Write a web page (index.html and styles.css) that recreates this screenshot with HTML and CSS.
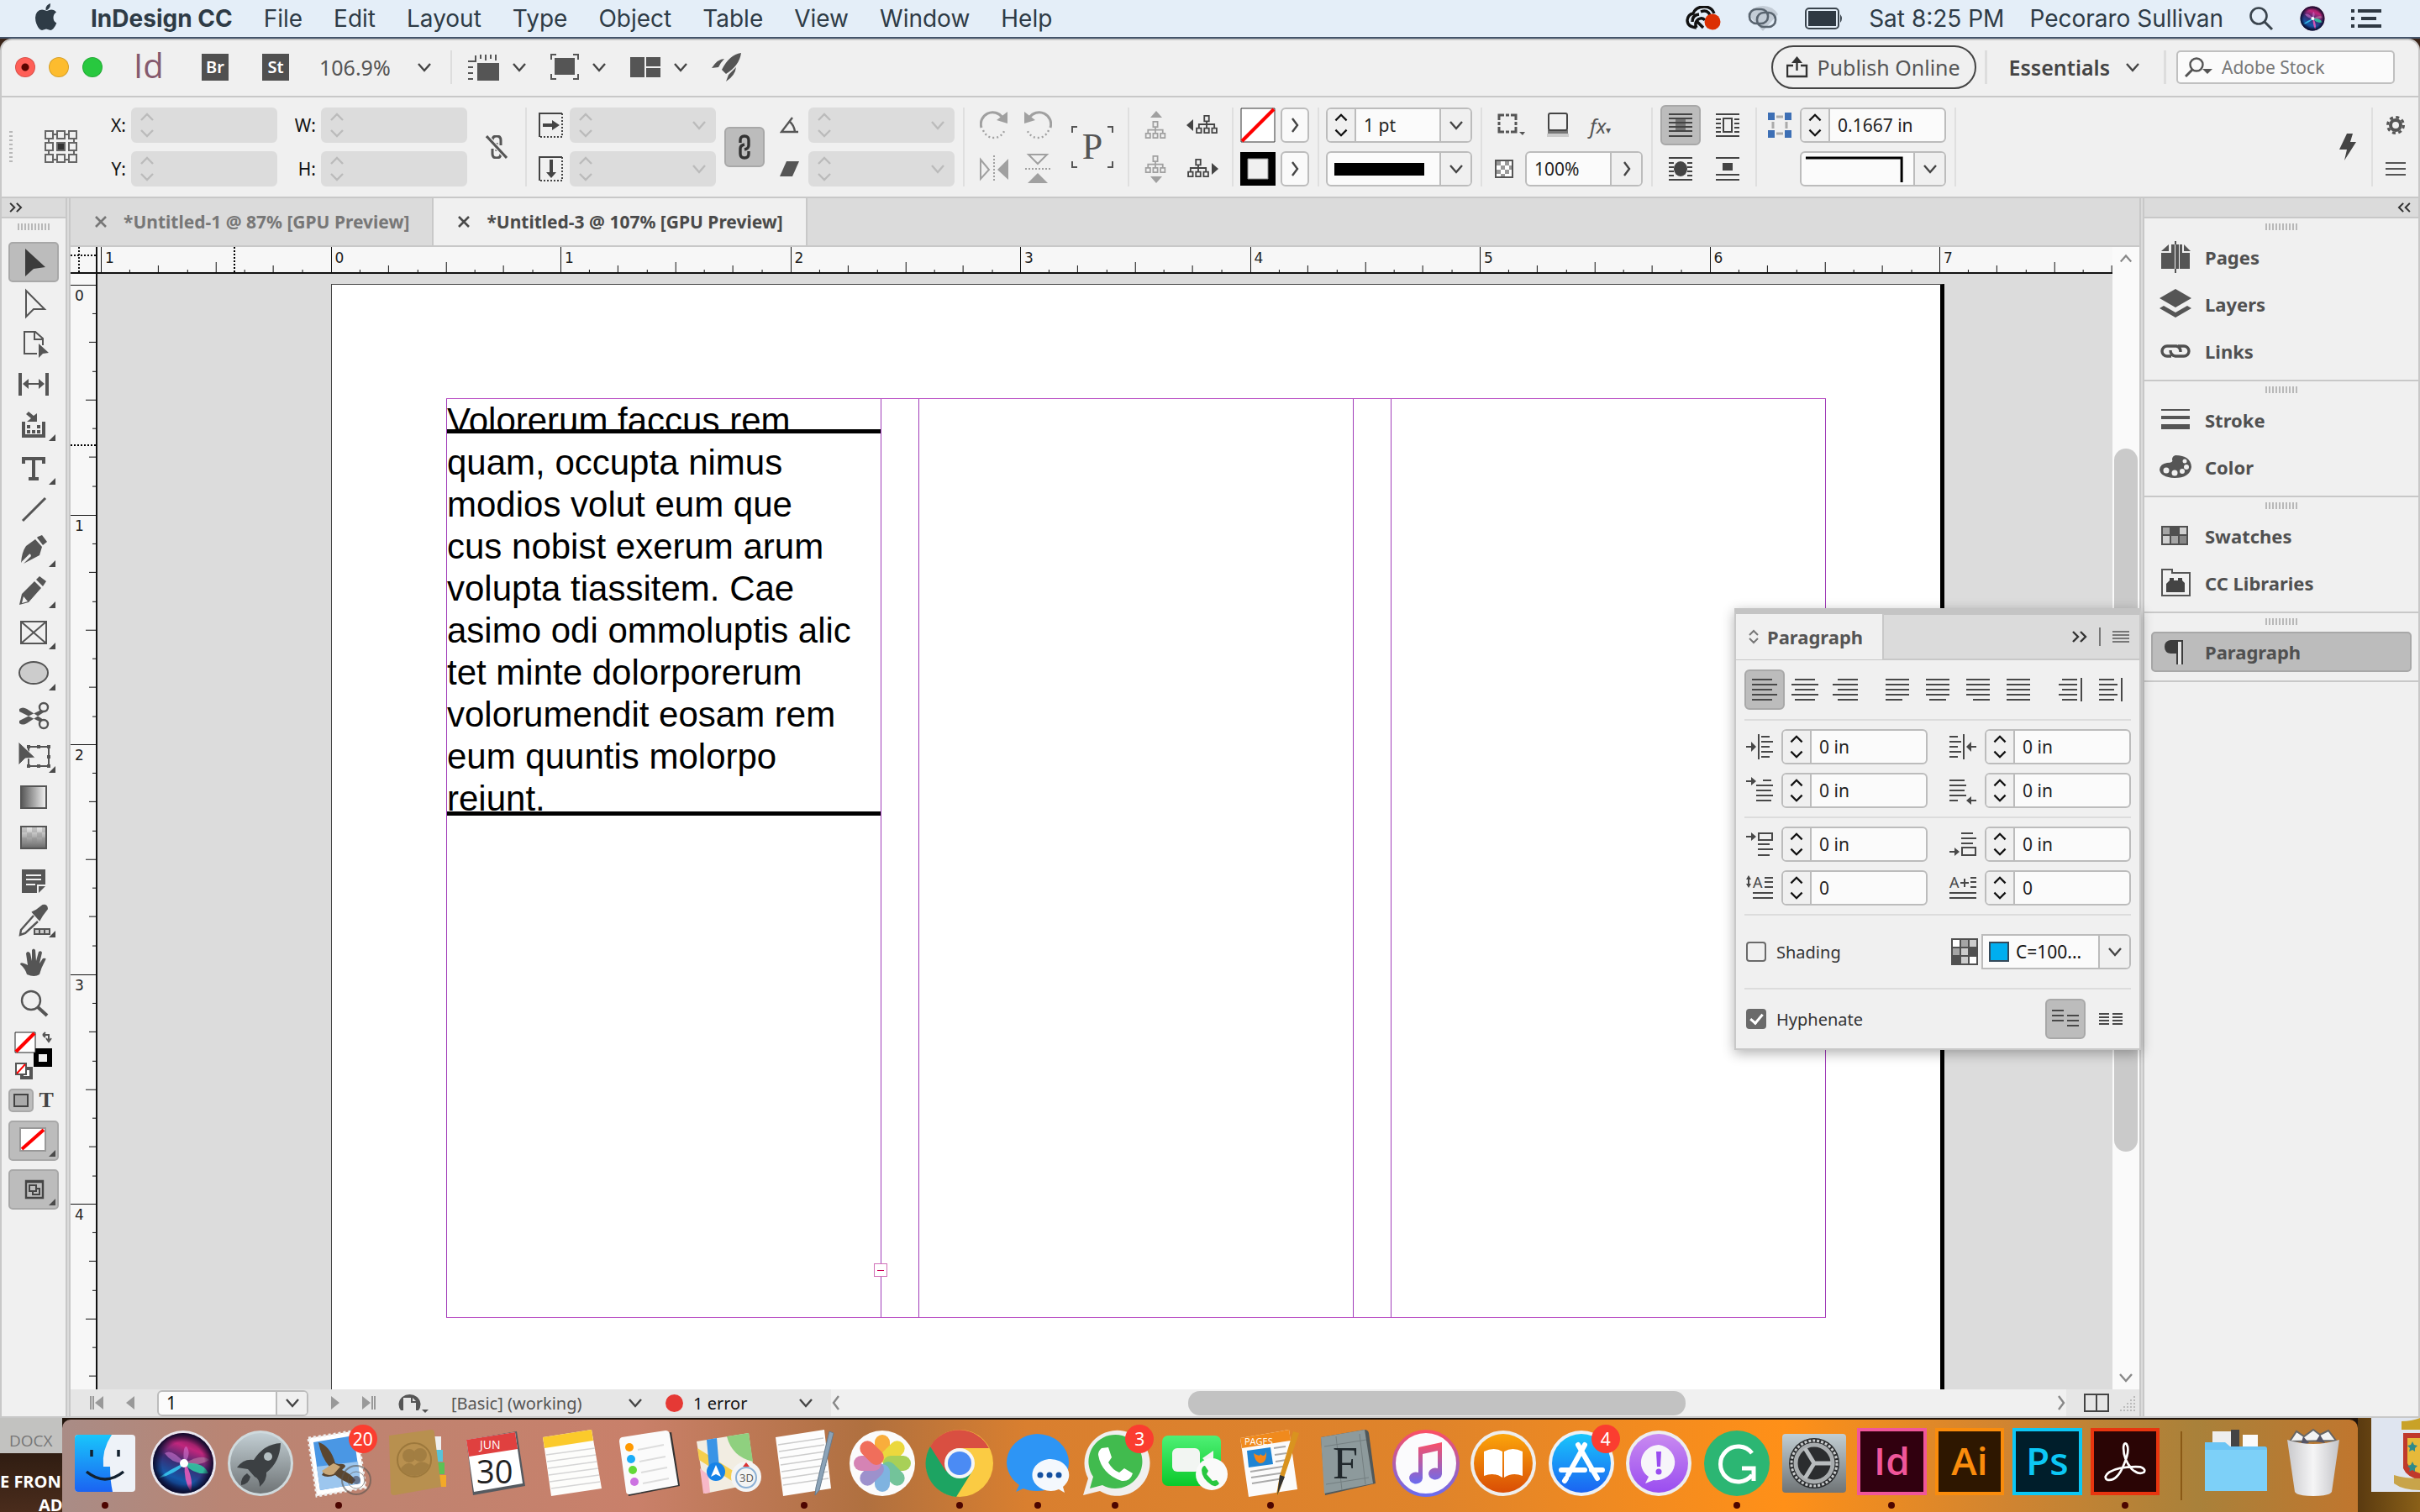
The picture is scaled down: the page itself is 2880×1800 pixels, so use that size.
FILE: index.html
```html
<!DOCTYPE html>
<html lang="en">
<head>
    <meta charset="UTF-8">
    <meta name="viewport" content="width=device-width, initial-scale=1.0">
    <title>InDesign CC</title>
    <link rel="stylesheet" href="styles.css">
</head>
<body>
    <!-- shared icons -->
    <svg class="defs" width="0" height="0">
        <defs>
            <linearGradient id="gSiri" x1=".7" y1="0" x2=".3" y2="1"><stop offset="0" stop-color="#5a1648"/><stop offset=".25" stop-color="#c0267c"/><stop offset=".5" stop-color="#3a2a70"/><stop offset=".75" stop-color="#1558a8"/><stop offset="1" stop-color="#10144a"/></linearGradient>
            <radialGradient id="gRim"><stop offset=".7" stop-color="#0a0a2a" stop-opacity="0"/><stop offset="1" stop-color="#0a0a2a"/></radialGradient>
            <linearGradient id="gBlue" x1="0" y1="0" x2="0" y2="1"><stop offset="0" stop-color="#19c6fb"/><stop offset="1" stop-color="#1b63f2"/></linearGradient>
            <linearGradient id="gGray" x1="0" y1="0" x2="0" y2="1"><stop offset="0" stop-color="#c2ced3"/><stop offset="1" stop-color="#6f7476"/></linearGradient>
            <linearGradient id="gGreen" x1="0" y1="0" x2="0" y2="1"><stop offset="0" stop-color="#4ef075"/><stop offset="1" stop-color="#0bc92b"/></linearGradient>
            <linearGradient id="gOrange" x1="0" y1="0" x2="0" y2="1"><stop offset="0" stop-color="#fba50b"/><stop offset="1" stop-color="#d94d05"/></linearGradient>
            <linearGradient id="gMusic" x1="0" y1="0" x2="0" y2="1"><stop offset="0" stop-color="#fa4f66"/><stop offset="1" stop-color="#6a6cf0"/></linearGradient>
            <linearGradient id="gPurple" x1="0" y1="0" x2="0" y2="1"><stop offset="0" stop-color="#c98af0"/><stop offset="1" stop-color="#9a4df0"/></linearGradient>
            <linearGradient id="gFade" x1="0" y1="0" x2="1" y2="0"><stop offset="0" stop-color="#555"/><stop offset="1" stop-color="#f4f4f4"/></linearGradient>
            <linearGradient id="gFeather" x1="0" y1="0" x2="0" y2="1"><stop offset="0" stop-color="#eee"/><stop offset="1" stop-color="#666"/></linearGradient>
            <linearGradient id="gTrash" x1="0" y1="0" x2="1" y2="0"><stop offset="0" stop-color="#c9c9cc"/><stop offset=".5" stop-color="#f5f5f6"/><stop offset="1" stop-color="#c4c4c8"/></linearGradient>
        </defs>
        <symbol id="spin" viewBox="0 0 34 38"><path d="M10 13l7-7 7 7M10 25l7 7 7-7" fill="none" stroke="currentColor" stroke-width="2.4"/></symbol>
        <symbol id="down" viewBox="0 0 18 12"><path d="M2 2l7 8 7-8" fill="none" stroke="currentColor" stroke-width="2.4"/></symbol>
        <symbol id="next" viewBox="0 0 12 18"><path d="M3 1l6 8-6 8" fill="none" stroke="currentColor" stroke-width="2.4"/></symbol>
        <symbol id="more" viewBox="0 0 20 14"><path d="M2 1l6 6-6 6M11 1l6 6-6 6" fill="none" stroke="currentColor" stroke-width="2.4"/></symbol>
        <symbol id="close" viewBox="0 0 14 14"><path d="M1 1l12 12M13 1L1 13" fill="none" stroke="currentColor" stroke-width="2.6"/></symbol>
        <symbol id="corner" viewBox="0 0 60 48"><path d="M48 43h8v-8z" fill="#4a4a4a"/></symbol>
        <symbol id="grip" viewBox="0 0 38 8"><path d="M1 0v8M5 0v8M9 0v8M13 0v8M17 0v8M21 0v8M25 0v8M29 0v8M33 0v8M37 0v8" stroke="#b8b8b8" stroke-width="2"/></symbol>
        <symbol id="inch-h" viewBox="0 0 274 30" preserveAspectRatio="none"><path d="M.5 0v30M34.5 27v3M68.5 22v8M103.5 27v3M137.5 18v12M171.5 27v3M205.5 22v8M240.5 27v3" stroke="#111" shape-rendering="crispEdges"/></symbol>
        <symbol id="inch-v" viewBox="0 0 30 274" preserveAspectRatio="none"><path d="M0 .5h30M26 34.5h4M22 68.5h8M26 103.5h4M18 137.5h12M26 171.5h4M22 205.5h8M26 240.5h4" stroke="#111" shape-rendering="crispEdges"/></symbol>
        <symbol id="tree" viewBox="0 0 28 24"><path d="M11 1h6v7h-6zM1 17h6v6H1zM11 17h6v6h-6zM21 17h6v6h-6zM14 8v9M4 17v-5h20v5" fill="none" stroke="currentColor" stroke-width="2"/></symbol>
        <symbol id="chain" viewBox="0 0 38 16"><path d="M17 2H9a6 6 0 0 0 0 12h5M22 2h7a6 6 0 0 1 0 12H19q-6-1-6-7M14 2h6q5 1 5 7" fill="none" stroke="currentColor" stroke-width="3.4"/></symbol>
        <symbol id="siri" viewBox="0 0 80 80"><circle cx="40" cy="40" r="39" fill="#e8e6ee"/><circle cx="40" cy="40" r="36" fill="url(#gSiri)"/><path d="M41 39Q26 22 18 28q8 12 23 12Q39 20 44 20q6 8-2 20" fill="#d77bd8" opacity=".55"/><path d="M42 40q20-12 29-4-12 8-29 4" fill="#b06a9c" opacity=".8"/><path d="M42 40q22-2 28 12-18 2-28-11" fill="#2fd0a4" opacity=".85"/><path d="M41 40Q26 46 10 58q20-5 32-17" fill="#39c8f0" opacity=".9"/><path d="M42 40q-2 20 7 34 4-14-6-34" fill="#e65ab8" opacity=".9"/><circle cx="41" cy="40" r="5" fill="#fff"/><circle cx="40" cy="40" r="36" fill="url(#gRim)"/></symbol>
    </svg>

    <header class="menubar">
        <svg class="apple" viewBox="0 0 26 32"><path d="M18 0q.4 4-2 6.400T12.500 8Q12 4.500 14 2.500T18 0M21.500 17q0-4.500 3.500-6.500-2.200-3-6-3-2 0-5.500 1.500Q10.500 7.500 8 7.500q-7.500.6-8 9.500.2 8 5 13.500 1.500 1.400 3 1.500l5-1.400L18 32q1.600 0 3.500-2 2.400-2.800 3.800-6.500-3.800-2-3.800-6.500" fill="#2e3b46"/></svg>
        <nav class="menus">
            <a class="app" href="#">InDesign CC</a>
            <a href="#">File</a>
            <a href="#">Edit</a>
            <a href="#">Layout</a>
            <a href="#">Type</a>
            <a href="#">Object</a>
            <a href="#">Table</a>
            <a href="#">View</a>
            <a href="#">Window</a>
            <a href="#">Help</a>
        </nav>
        <div class="extras">
            <svg width="42" height="30" viewBox="0 0 42 30"><path d="M13 26Q2 25 2 17q1-7 7-8 3-8 13-8 9 0 12 8M8 19q0-8 8-9M13 26q-3-6 2-10 5-3 8 1M18 7q8-3 11 4M13 18l8 8" fill="none" stroke="#111" stroke-width="3.400"/><circle cx="32" cy="19" r="9.500" fill="#dc2f02"/></svg>
            <svg width="40" height="30" viewBox="0 0 40 30"><path d="M2 10Q8 0 20 0t18 10L20 30z" fill="#c3ccd6"/><g fill="none" stroke="#59646f" stroke-width="2.600"><rect x="4" y="4" width="22" height="17" rx="8"/><rect x="13" y="8" width="22" height="17" rx="8"/></g></svg>
            <svg width="46" height="26" viewBox="0 0 46 26"><rect x="1" y="1" width="39" height="24" rx="4" fill="none" stroke="#3a444d" stroke-width="2"/><rect x="4" y="4" width="33" height="18" fill="#2f3943"/><path d="M42 8q4 5 0 10z" fill="#3a444d"/></svg>
            <span>Sat 8:25 PM</span>
            <span>Pecoraro Sullivan</span>
            <svg width="30" height="30" viewBox="0 0 30 30"><circle cx="12" cy="12" r="9.500" fill="none" stroke="#3a444d" stroke-width="2.600"/><path d="M19 19l9 9" stroke="#3a444d" stroke-width="3"/></svg>
            <svg width="32" height="32"><use href="#siri"/></svg>
            <svg width="36" height="22" viewBox="0 0 36 22"><path d="M0 2h4M8 2h28M0 11h4M12 11h18M0 20h4M8 20h28" stroke="#2f3943" stroke-width="4"/></svg>
        </div>
    </header>

    <main class="window">
        <div class="appbar">
            <div class="lights"><i class="red"></i><i class="yellow"></i><i class="green"></i></div>
            <span class="logo">Id</span>
            <button class="badge">Br</button>
            <button class="badge">St</button>
            <div class="pick zoom">
                <select aria-label="Zoom level"><option>106.9%</option></select>
                <svg class="chev"><use href="#down"/></svg>
            </div>
            <div class="views">
                <button aria-label="View options"><svg width="38" height="32" viewBox="0 0 38 32"><path d="M12 11h26v21H12z" fill="#555"/><path d="M10 2v7H1M16 1v5M22 1v7M28 1v5M34 1v7M1 16h6M1 23h6M1 30h6" fill="none" stroke="#555" stroke-width="2"/></svg><svg class="chev"><use href="#down"/></svg></button>
                <button aria-label="Screen mode"><svg width="34" height="32" viewBox="0 0 34 32"><path d="M5 5h24v20H5z" fill="#555"/><path d="M1 7V1h6M27 1h6v6M33 24v6h-6M7 30H1v-6" fill="none" stroke="#555" stroke-width="2"/></svg><svg class="chev"><use href="#down"/></svg></button>
                <button aria-label="Arrange documents"><svg width="36" height="24" viewBox="0 0 36 24"><path d="M0 0h17v24H0zM19 0h17v11H19zM19 13h17v11H19z" fill="#555"/></svg><svg class="chev"><use href="#down"/></svg></button>
                <button aria-label="GPU performance"><svg width="36" height="34" viewBox="0 0 36 34"><path d="M35 0Q21 2 12 20l5 5Q33 15 35 0M15 7Q7 7 0 18l8-1q3-6 7-10M29 17l-9 9-3 8q11-7 12-17" fill="#555"/></svg></button>
            </div>
            <button class="publish"><svg width="26" height="26" viewBox="0 0 26 26"><path d="M8 11H1v13h23V11h-7M12.500 17V3" fill="none" stroke="#333" stroke-width="2.400"/><path d="M6 8l6.500-8L19 8z" fill="#333"/></svg>Publish Online</button>
            <button class="workspace-name">Essentials <svg class="chev"><use href="#down"/></svg></button>
            <label class="stock">
                <svg width="34" height="24" viewBox="0 0 34 24"><circle cx="14" cy="9" r="7.500" fill="none" stroke="#555" stroke-width="2.400"/><path d="M9 15l-8 8" stroke="#555" stroke-width="3"/><path d="M21 14h12l-6 6z" fill="#555"/></svg>
                <input type="text" placeholder="Adobe Stock" aria-label="Search Adobe Stock">
            </label>
        </div>

        <div class="control">
            <div class="group position">
                <svg class="tall" width="4" height="38" viewBox="0 0 4 38"><path d="M2 0v38" stroke="#b8b8b8" stroke-width="4" stroke-dasharray="2 3"/></svg>
                <svg class="tall" width="40" height="40" viewBox="0 0 40 40"><path d="M5 5h30v30H5z" fill="none" stroke="#666" stroke-width="2"/><g fill="#f0f0f0" stroke="#666" stroke-width="2"><path d="M1 1h9v9H1zM15 1h9v9h-9zM29 1h9v9h-9zM1 15h9v9H1zM29 15h9v9h-9zM1 29h9v9H1zM15 29h9v9h-9zM29 29h9v9h-9z"/><path d="M15 15h9v9h-9z" fill="#333"/></g></svg>
                <label for="x">X:</label>
                <label for="y">Y:</label>
                <div class="field off"><svg class="spin"><use href="#spin"/></svg><input id="x" type="text" disabled></div>
                <div class="field off"><svg class="spin"><use href="#spin"/></svg><input id="y" type="text" disabled></div>
                <label for="w">W:</label>
                <label for="h">H:</label>
                <div class="field off"><svg class="spin"><use href="#spin"/></svg><input id="w" type="text" disabled></div>
                <div class="field off"><svg class="spin"><use href="#spin"/></svg><input id="h" type="text" disabled></div>
                <svg class="tall mid" width="26" height="28" viewBox="0 0 26 28"><path d="M8 11V6q0-5 5-5t5 5v6M8 16v6q0 5 5 5t5-5v-1M13 9v10" fill="none" stroke="#555" stroke-width="3"/><path d="M1 1l24 26" stroke="#f0f0f0" stroke-width="6"/><path d="M1 1l24 26" stroke="#555" stroke-width="3"/></svg>
            </div>
            <div class="group scale">
                <svg width="30" height="30" viewBox="0 0 30 30"><path d="M28 1H1v28" fill="none" stroke="#444" stroke-width="2"/><path d="M28 1v28H1" fill="none" stroke="#444" stroke-width="2" stroke-dasharray="2 2"/><path d="M5 13h11V9l9 6-9 6v-4H5z" fill="#444"/></svg>
                <svg width="30" height="30" viewBox="0 0 30 30"><path d="M28 1H1v28" fill="none" stroke="#444" stroke-width="2"/><path d="M28 1v28H1" fill="none" stroke="#444" stroke-width="2" stroke-dasharray="2 2"/><path d="M13 4v15H9l6 7 6-7h-4V4z" fill="#444"/></svg>
                <div class="field off"><svg class="spin"><use href="#spin"/></svg><input type="text" aria-label="Scale X" disabled><svg class="chev"><use href="#down"/></svg></div>
                <div class="field off"><svg class="spin"><use href="#spin"/></svg><input type="text" aria-label="Scale Y" disabled><svg class="chev"><use href="#down"/></svg></div>
                <button class="square on tall" aria-label="Constrain proportions"><svg width="14" height="30" viewBox="0 0 14 30"><path d="M2 10V7q0-5 5-5t5 5v6q0 4-5 5M12 20v3q0 5-5 5t-5-5v-6q0-4 5-5" fill="none" stroke="#333" stroke-width="3.400"/></svg></button>
                <svg width="24" height="20" viewBox="0 0 24 20"><path d="M15 1L2 18h20M12 6q5 4 6 12" fill="none" stroke="#555" stroke-width="2.400"/></svg>
                <svg width="24" height="20" viewBox="0 0 24 20"><path d="M8 1h15l-8 18H0z" fill="#555"/></svg>
                <div class="field off"><svg class="spin"><use href="#spin"/></svg><input type="text" aria-label="Rotation angle" disabled><svg class="chev"><use href="#down"/></svg></div>
                <div class="field off"><svg class="spin"><use href="#spin"/></svg><input type="text" aria-label="Shear angle" disabled><svg class="chev"><use href="#down"/></svg></div>
            </div>
            <div class="group flips">
                <svg width="34" height="34" viewBox="0 0 34 34"><path d="M2 20A14 14 0 0 1 27 8" fill="none" stroke="#a0a0a0" stroke-width="3"/><path d="M33 1v14l-13-4z" fill="#a0a0a0"/><path d="M4 23q4 9 13 9t13-10" fill="none" stroke="#a0a0a0" stroke-width="2.400" stroke-dasharray="2 3"/></svg>
                <svg width="36" height="34" viewBox="0 0 36 34"><path d="M2 6l10 12L2 29z" fill="none" stroke="#a0a0a0" stroke-width="2"/><path d="M18 1v32" stroke="#a0a0a0" stroke-width="2" stroke-dasharray="2 2"/><path d="M35 5v25L22 18z" fill="#a0a0a0"/></svg>
                <svg width="34" height="34" viewBox="0 0 34 34"><path d="M32 20A14 14 0 0 0 7 8" fill="none" stroke="#a0a0a0" stroke-width="3"/><path d="M1 1v14l13-4z" fill="#a0a0a0"/><path d="M30 23q-4 9-13 9T4 22" fill="none" stroke="#a0a0a0" stroke-width="2.400" stroke-dasharray="2 3"/></svg>
                <svg width="32" height="36" viewBox="0 0 32 36"><path d="M5 1h22L16 12z" fill="none" stroke="#a0a0a0" stroke-width="2"/><path d="M1 18h30" stroke="#a0a0a0" stroke-width="2" stroke-dasharray="2 2"/><path d="M4 35h24L16 23z" fill="#a0a0a0"/></svg>
                <div class="proxy tall"><svg width="50" height="50" viewBox="0 0 50 50"><path d="M1 8V1h6M43 1h6v7M49 42v7h-6M7 49H1v-7" fill="none" stroke="#555" stroke-width="2"/></svg><span>P</span></div>
            </div>
            <div class="group trees">
                <svg class="pale" width="28" height="34" viewBox="0 0 28 34"><path d="M14 0l7 8H7z" fill="#a0a0a0"/><use href="#tree" y="12" width="26" height="21"/></svg>
                <svg class="pale" width="28" height="34" viewBox="0 0 28 34"><path d="M14 34l7-8H7z" fill="#a0a0a0"/><use href="#tree" y="1" width="26" height="21"/></svg>
                <svg class="ink" width="38" height="24" viewBox="0 0 38 24"><path d="M0 12l8-7v14z" fill="#444"/><use href="#tree" x="11" width="26" height="22"/></svg>
                <svg class="ink" width="38" height="24" viewBox="0 0 38 24"><path d="M38 12l-8-7v14z" fill="#444"/><use href="#tree" x="1" width="26" height="22"/></svg>
            </div>
            <div class="group paint">
                <svg width="42" height="42" viewBox="0 0 42 42"><path d="M1 1h40v40H1z" fill="#fff" stroke="#333"/><path d="M2 40L40 2" stroke="#f00" stroke-width="4"/></svg>
                <svg width="42" height="42" viewBox="0 0 42 42"><path d="M0 1h42v40H0z"/><path d="M9 9h24v24H9z" fill="#f0f0f0" stroke="#888"/></svg>
                <button class="arrow" aria-label="Fill"><svg width="12" height="18"><use href="#next"/></svg></button>
                <button class="arrow" aria-label="Stroke"><svg width="12" height="18"><use href="#next"/></svg></button>
            </div>
            <div class="group weight">
                <div class="field"><button class="spin" aria-label="Step weight"><svg><use href="#spin"/></svg></button><input type="text" value="1 pt" aria-label="Stroke weight"><button class="drop" aria-label="Weights"><svg class="chev"><use href="#down"/></svg></button></div>
                <div class="field"><span class="bar"></span><button class="drop" aria-label="Stroke type"><svg class="chev"><use href="#down"/></svg></button></div>
            </div>
            <div class="group effects">
                <div class="icons">
                    <svg width="34" height="28" viewBox="0 0 34 28"><path d="M2 8V2h6M16 2h6v6M22 16v6h-6M8 22H2v-6M10 2h4M10 22h4M2 10v4M22 10v4" fill="none" stroke="#555" stroke-width="3"/><path d="M26 22h7l-3 4z" fill="#555"/></svg>
                    <svg width="28" height="30" viewBox="0 0 28 30"><path d="M2 21h24v4H2z" fill="#777"/><path d="M1 25h26v4H1z" fill="#ccc"/><rect x="3" y="1" width="22" height="20" rx="2" fill="#f0f0f0" stroke="#444" stroke-width="2"/></svg>
                    <span class="fx">fx<small>▾</small></span>
                </div>
                <div class="opacity">
                    <svg width="24" height="24" viewBox="0 0 24 24"><path d="M2 2h20v20H2z" fill="#fff" stroke="#555" stroke-width="2"/><path d="M3 3h5v5H3zM13 3h5v5h-5zM8 8h5v5H8zM18 8h3v5h-3zM3 13h5v5H3zM13 13h5v5h-5zM8 18h5v3H8z" fill="#999"/></svg>
                    <div class="field"><input type="text" value="100%" aria-label="Opacity"><button class="drop" aria-label="Opacity slider"><svg width="12" height="18"><use href="#next"/></svg></button></div>
                </div>
            </div>
            <div class="group wraps">
                <button class="square on" aria-label="No text wrap"><svg width="28" height="28" viewBox="0 0 28 28"><path d="M0 1h28M0 6h28M0 11h28M0 16h28M0 21h28M0 27h28" stroke="#444" stroke-width="2"/><path d="M8 5h12v17H8z" fill="#444" opacity=".6"/></svg></button>
                <button class="square" aria-label="Wrap around shape"><svg width="28" height="28" viewBox="0 0 28 28"><path d="M0 1h28M0 7h6M0 12h6M0 17h6M0 22h6M22 7h6M22 12h6M22 17h6M22 22h6M0 27h28" stroke="#444" stroke-width="2"/><ellipse cx="14" cy="14" rx="8" ry="9" fill="#444"/></svg></button>
                <button class="square" aria-label="Wrap around box"><svg width="28" height="28" viewBox="0 0 28 28"><path d="M0 1h28M0 7h6M0 12h6M0 17h6M0 22h6M22 7h6M22 12h6M22 17h6M22 22h6M0 27h28M9 6h10v16H9z" fill="none" stroke="#444" stroke-width="2"/></svg></button>
                <button class="square" aria-label="Jump object"><svg width="28" height="28" viewBox="0 0 28 28"><path d="M0 1h28M0 21h28M0 27h28" stroke="#444" stroke-width="2"/><path d="M8 7h12v9H8z" fill="#444"/></svg></button>
            </div>
            <div class="group corners">
                <svg width="28" height="30" viewBox="0 0 28 30"><path d="M0 0h8v9H0zM20 0h8v9h-8zM0 21h8v9H0zM20 21h8v9h-8z" fill="#3d6fb5"/><path d="M10 5h8M10 25h8M6 11v8M22 11v8" stroke="#aaa" stroke-width="3"/></svg>
                <div class="field"><button class="spin" aria-label="Step corner size"><svg><use href="#spin"/></svg></button><input type="text" value="0.1667 in" aria-label="Corner size"></div>
                <div class="field"><svg class="cornershape" viewBox="0 0 134 38"><path d="M5 6h115v29" fill="none" stroke="#000" stroke-width="3"/></svg><button class="drop" aria-label="Corner shape"><svg class="chev"><use href="#down"/></svg></button></div>
            </div>
            <svg class="bolt" width="20" height="32" viewBox="0 0 20 32"><path d="M9 0h7l-3 10h7L6 32l3-13H0z" fill="#444"/></svg>
            <div class="group prefs">
                <svg width="22" height="22" viewBox="0 0 22 22"><circle cx="11" cy="11" r="6" fill="none" stroke="#555" stroke-width="4"/><circle cx="11" cy="11" r="9.500" fill="none" stroke="#555" stroke-width="3" stroke-dasharray="4 3.460"/></svg>
                <svg width="24" height="16" viewBox="0 0 24 16"><path d="M0 1h24M0 8h24M0 15h24" stroke="#555" stroke-width="2"/></svg>
            </div>
        </div>

        <div class="workspace">
            <aside class="tools">
                <div class="strip"><svg width="20" height="12"><use href="#more"/></svg></div>
                <svg class="grip"><use href="#grip"/></svg>
                <button class="on" aria-label="Selection"><svg viewBox="0 0 60 48"><path d="M20 8v33l10-9 14-2z" fill="#3c3c3c"/></svg></button>
                <button aria-label="Direct selection"><svg viewBox="0 0 60 48"><path d="M21 8v31l9-9h13z" fill="none" stroke="#555" stroke-width="2"/></svg></button>
                <button aria-label="Page"><svg viewBox="0 0 60 48"><path d="M34 34H19V8h13l9 8v8M31 8v9h10" fill="none" stroke="#555" stroke-width="2"/><path d="M36 22v17l5-5 7-1z" fill="#555"/></svg></button>
                <button aria-label="Gap"><svg viewBox="0 0 60 48"><path d="M14 8v27M46 8v27" stroke="#555" stroke-width="4"/><path d="M22 21h16" stroke="#555" stroke-width="2"/><path d="M17 21l7-6v12zM43 21l-7-6v12z" fill="#555"/></svg></button>
                <button aria-label="Content collector"><svg viewBox="0 0 60 48"><path d="M18 17v17h24V17" fill="none" stroke="#555" stroke-width="4"/><path d="M22 21h4v4h-4zM34 21h4v4h-4zM22 27h4v4h-4zM28 27h4v4h-4zM34 27h4v4h-4zM22 17h12V7l-4 3-6-5-3 3 6 5z" fill="#555"/><use href="#corner" y="-3" width="60" height="48"/></svg></button>
                <button aria-label="Type"><svg viewBox="0 0 60 48"><path d="M16 10h28v8h-4v-4h-8v20h4v4H24v-4h4V14h-8v4h-4z" fill="#555"/><use href="#corner"/></svg></button>
                <button aria-label="Line"><svg viewBox="0 0 60 48"><path d="M17 37l27-27" stroke="#555" stroke-width="3"/></svg></button>
                <button aria-label="Pen"><svg viewBox="0 0 60 48"><path d="M35 7l5-2 6 8-5 4-7-9M32 10l8 9-3 10-19 10 9-9-1-2-11 10q1-13 6-20z" fill="#555"/><path d="M16 38l10-10" stroke="#f0f0f0" stroke-width="2"/><use href="#corner"/></svg></button>
                <button aria-label="Pencil"><svg viewBox="0 0 60 48"><path d="M33 9l4-4 8 6-4 6zM31 11l8 8-15 17-11 3 3-13z" fill="#555"/><path d="M18 29l5 6-7 2z" fill="#f0f0f0"/><use href="#corner"/></svg></button>
                <button aria-label="Rectangle frame"><svg viewBox="0 0 60 48"><path d="M15 10h30v26H15zl30 26M45 10L15 36" fill="none" stroke="#555" stroke-width="2"/><use href="#corner"/></svg></button>
                <button aria-label="Ellipse"><svg viewBox="0 0 60 48"><ellipse cx="30" cy="22" rx="17" ry="13" fill="#ccc" stroke="#555" stroke-width="2"/><use href="#corner"/></svg></button>
                <button aria-label="Scissors"><svg viewBox="0 0 60 48"><path d="M13 33q4 3 9 0l20-13-3-3-26 13zM13 16q4-3 9 0l20 13-3 3-26-13z" fill="#555"/><circle cx="42" cy="14" r="5" fill="#f0f0f0" stroke="#555" stroke-width="2.400"/><circle cx="42" cy="34" r="5" fill="#f0f0f0" stroke="#555" stroke-width="2.400"/></svg></button>
                <button aria-label="Free transform"><svg viewBox="0 0 60 48"><path d="M24 12h24v23H24z" fill="none" stroke="#555" stroke-width="2"/><path d="M22 10h4v4h-4zM34 10h4v4h-4zM46 10h4v4h-4zM46 22h4v4h-4zM22 33h4v4h-4zM34 33h4v4h-4zM46 33h4v4h-4z" fill="#555"/><path d="M12 6v28l8-8 12-1z" fill="#555" stroke="#f0f0f0"/><use href="#corner"/></svg></button>
                <button aria-label="Gradient swatch"><svg viewBox="0 0 60 48"><path d="M15 10h30v26H15z" fill="url(#gFade)" stroke="#555" stroke-width="2"/></svg></button>
                <button aria-label="Gradient feather"><svg viewBox="0 0 60 48"><path d="M15 9h30v26H15z" fill="url(#gFeather)" stroke="#555" stroke-width="2"/><path d="M16 10h6v6h-6zM28 10h6v6h-6zM40 10h4v6h-4zM22 16h6v6h-6zM34 16h6v6h-6zM16 22h6v6h-6zM28 22h6v6h-6zM40 22h4v6h-4z" fill="#888" opacity=".35"/></svg></button>
                <button aria-label="Note"><svg viewBox="0 0 60 48"><path d="M16 11h28v18H34v10H16z" fill="#555"/><path d="M21 18h18M21 23h18M21 29h11" stroke="#f0f0f0" stroke-width="2"/><path d="M36 39v-8h8z" fill="#555"/></svg></button>
                <button aria-label="Eyedropper"><svg viewBox="0 0 60 48"><path d="M30 17L15 34l-1 6 6-2 15-14" fill="none" stroke="#555" stroke-width="2.400"/><path d="M29 13l4-2 8-6q5-1 5 4l-6 8-3 5z" fill="#555" stroke="#555" stroke-width="2"/><path d="M31 33h18v6H31zM37 33v6M43 33v6" fill="#ccc" stroke="#555" stroke-width="2"/><use href="#corner"/></svg></button>
                <button aria-label="Hand"><svg viewBox="0 0 60 48"><path d="M22 38q-2-7-8-12 0-4 9 1l-2-14q2-4 5 0l2 9V9q2-3 4 0l1 13 3-11q3-2 4 1l-3 13 4-6q5-1 3 2-5 9-7 17-6 4-15 0" fill="#555"/></svg></button>
                <button aria-label="Zoom"><svg viewBox="0 0 60 48"><circle cx="27" cy="20" r="11" fill="none" stroke="#555" stroke-width="2.400"/><path d="M35 28l11 10" stroke="#555" stroke-width="4"/></svg></button>
                <svg class="fillstroke" viewBox="0 0 60 60"><path d="M30 20h22v22H30z"/><path d="M36 27h10v9H36z" fill="#f0f0f0"/><path d="M8 1h24v24H8z" fill="#fff" stroke="#222"/><path d="M9 24L31 2" stroke="#f00" stroke-width="4"/><path d="M41 4h7v6M41 4l3-3M41 4l3 3M45 8l3 4 3-4" fill="none" stroke="#555" stroke-width="2"/><path d="M16 44h11v11H16z" fill="#fff" stroke="#555" stroke-width="4"/><path d="M9 38h12v13H9z" fill="#fff" stroke="#555" stroke-width="2"/><path d="M10 50l10-11" stroke="#f00" stroke-width="2"/></svg>
                <div class="apply">
                    <button class="on" aria-label="Formatting affects container"><svg width="18" height="16" viewBox="0 0 18 16"><path d="M1 1h16v14H1z" fill="#aaa" stroke="#444" stroke-width="2"/></svg></button>
                    <button aria-label="Formatting affects text">T</button>
                </div>
                <button class="on wide" aria-label="Apply none"><svg viewBox="0 0 60 48"><path d="M14 9h30v27H14z" fill="#fff" stroke="#999" stroke-width="2"/><path d="M16 34l26-23" stroke="#f00" stroke-width="4"/><use href="#corner"/></svg></button>
                <button class="on wide" aria-label="Screen mode"><svg viewBox="0 0 60 48"><path d="M21 14h20v20H21zM21 15h20" fill="none" stroke="#444" stroke-width="2.400"/><path d="M29 23h8v7h-8z" fill="none" stroke="#444" stroke-width="2"/><path d="M25 19h8v7h-8z" fill="#bcbcbc" stroke="#444" stroke-width="2"/><use href="#corner"/></svg></button>
            </aside>

            <section class="document">
                <div class="tabs">
                    <button class="tab"><svg width="14" height="14"><use href="#close"/></svg>*Untitled-1 @ 87% [GPU Preview]</button>
                    <button class="tab active"><svg width="14" height="14"><use href="#close"/></svg>*Untitled-3 @ 107% [GPU Preview]</button>
                </div>
                <div class="view">
                    <div class="origin"></div>
                    <div class="ruler across">
                        <div><svg><use href="#inch-h"/></svg><span>1</span></div>
                        <div><svg><use href="#inch-h"/></svg><span>0</span></div>
                        <div><svg><use href="#inch-h"/></svg><span>1</span></div>
                        <div><svg><use href="#inch-h"/></svg><span>2</span></div>
                        <div><svg><use href="#inch-h"/></svg><span>3</span></div>
                        <div><svg><use href="#inch-h"/></svg><span>4</span></div>
                        <div><svg><use href="#inch-h"/></svg><span>5</span></div>
                        <div><svg><use href="#inch-h"/></svg><span>6</span></div>
                        <div><svg><use href="#inch-h"/></svg><span>7</span></div>
                        <i class="cursor-x"></i>
                    </div>
                    <div class="scroll-y">
                        <svg class="up"><use href="#down"/></svg>
                        <i></i>
                        <svg class="chev"><use href="#down"/></svg>
                    </div>
                    <div class="ruler downward">
                        <div><svg><use href="#inch-v"/></svg><span>0</span></div>
                        <div><svg><use href="#inch-v"/></svg><span>1</span></div>
                        <div><svg><use href="#inch-v"/></svg><span>2</span></div>
                        <div><svg><use href="#inch-v"/></svg><span>3</span></div>
                        <div><svg><use href="#inch-v"/></svg><span>4</span></div>
                        <i class="cursor-y"></i>
                    </div>
                    <div class="pasteboard">
                        <article class="page">
                            <div class="margins">
                                <div class="column">
                                    <p>Volorerum faccus rem<br>quam, occupta nimus<br>modios volut eum que<br>cus nobist exerum arum<br>volupta tiassitem. Cae<br>asimo odi ommoluptis alic<br>tet minte dolorporerum<br>volorumendit eosam rem<br>eum quuntis molorpo<br>reiunt.</p>
                                    <i class="outport"></i>
                                </div>
                                <div class="column"></div>
                                <div class="column"></div>
                            </div>
                        </article>
                    </div>
                </div>
                <div class="status">
                    <svg width="16" height="16" viewBox="0 0 16 16"><path d="M1 0v16M4 0v16" stroke="#999" stroke-width="2"/><path d="M16 0v16L6 8z" fill="#999"/></svg>
                    <svg width="10" height="16" viewBox="0 0 10 16"><path d="M10 0v16L0 8z" fill="#999"/></svg>
                    <div class="field pageno"><input type="text" value="1" aria-label="Page"><button class="drop" aria-label="Pages"><svg class="chev"><use href="#down"/></svg></button></div>
                    <svg width="10" height="16" viewBox="0 0 10 16"><path d="M0 0v16l10-8z" fill="#999"/></svg>
                    <svg width="16" height="16" viewBox="0 0 16 16"><path d="M15 0v16M12 0v16" stroke="#999" stroke-width="2"/><path d="M0 0v16l10-8z" fill="#999"/></svg>
                    <svg width="36" height="26" viewBox="0 0 36 26"><path d="M3 22A13 12 0 1 1 24 22z" fill="#555"/><path d="M6 26V7h9v6h6v13z" fill="#e6e6e6"/><path d="M17 7v4h4z" fill="#e6e6e6"/><path d="M28 21h8l-4 4z" fill="#555"/></svg>
                    <div class="pick profile"><select aria-label="Preflight profile"><option>[Basic] (working)</option></select><svg class="chev"><use href="#down"/></svg></div>
                    <div class="pick errors"><i></i><select aria-label="Errors"><option>1 error</option></select><svg class="chev"><use href="#down"/></svg></div>
                    <div class="scroll-x"><svg class="left" width="12" height="18"><use href="#next"/></svg><i></i><svg width="12" height="18"><use href="#next"/></svg></div>
                    <div class="window-tools">
                        <svg width="30" height="22" viewBox="0 0 30 22"><path d="M1 1h28v20H1zM15 1v20" fill="none" stroke="#444" stroke-width="2"/></svg>
                        <svg width="20" height="20" viewBox="0 0 20 20"><path d="M1 19h18M5 15h14M9 11h10M13 7h6M17 3h2" stroke="#bbb" stroke-width="2" stroke-dasharray="2 2"/></svg>
                    </div>
                </div>

                <div class="panel">
                    <div class="panel-head">
                        <h2><svg width="12" height="18" viewBox="0 0 12 18"><path d="M1 7l5-5 5 5M1 11l5 5 5-5" fill="none" stroke="#777" stroke-width="2"/></svg>Paragraph</h2>
                        <svg width="20" height="16"><use href="#more"/></svg>
                        <i></i>
                        <svg width="20" height="14" viewBox="0 0 20 14"><path d="M0 1h20M0 5h20M0 9h20M0 13h20" stroke="#777" stroke-width="2"/></svg>
                    </div>
                    <div class="aligns">
                        <button class="square on" aria-label="Align left"><svg viewBox="0 0 32 28"><path d="M1 2h24M1 8h30M1 14h24M1 20h30M1 26h24"/></svg></button>
                        <button class="square" aria-label="Align center"><svg viewBox="0 0 32 28"><path d="M4 2h24M0 8h32M4 14h24M0 20h32M4 26h24"/></svg></button>
                        <button class="square" aria-label="Align right"><svg viewBox="0 0 32 28"><path d="M7 2h24M1 8h30M7 14h24M1 20h30M7 26h24"/></svg></button>
                        <span></span>
                        <button class="square" aria-label="Justify last left"><svg viewBox="0 0 32 28"><path d="M2 2h28M2 8h28M2 14h28M2 20h28M2 26h20"/></svg></button>
                        <button class="square" aria-label="Justify last centered"><svg viewBox="0 0 32 28"><path d="M2 2h28M2 8h28M2 14h28M2 20h28M6 26h20"/></svg></button>
                        <button class="square" aria-label="Justify last right"><svg viewBox="0 0 32 28"><path d="M2 2h28M2 8h28M2 14h28M2 20h28M10 26h20"/></svg></button>
                        <button class="square" aria-label="Justify all"><svg viewBox="0 0 32 28"><path d="M2 2h28M2 8h28M2 14h28M2 20h28M2 26h28"/></svg></button>
                        <span></span>
                        <button class="square" aria-label="Align towards spine"><svg viewBox="0 0 32 28"><path d="M6 2h18M2 8h22M6 14h18M2 20h22M6 26h18M29 0v28"/></svg></button>
                        <button class="square" aria-label="Align away from spine"><svg viewBox="0 0 32 28"><path d="M2 2h18M2 8h22M2 14h18M2 20h22M2 26h18M29 0v28"/></svg></button>
                    </div>
                    <div class="rows">
                        <svg viewBox="0 0 32 30"><path d="M15 0v30M18 3h10M18 9h14M18 15h10M18 21h14M18 27h10M0 15h8"/><path d="M6 9l6 6-6 6z" class="solid"/></svg>
                        <div class="field"><button class="spin" aria-label="Step"><svg><use href="#spin"/></svg></button><input type="text" value="0 in" aria-label="Left indent"></div>
                        <svg viewBox="0 0 32 30"><path d="M17 0v30M0 3h10M0 9h14M0 15h10M0 21h14M0 27h10M24 15h8"/><path d="M26 9l-6 6 6 6z" class="solid"/></svg>
                        <div class="field"><button class="spin" aria-label="Step"><svg><use href="#spin"/></svg></button><input type="text" value="0 in" aria-label="Right indent"></div>
                        <svg viewBox="0 0 32 30"><path d="M20 3h10M12 9h20M12 15h18M12 21h20M12 27h18M0 4h8"/><path d="M6-1l6 5-6 5z" class="solid"/></svg>
                        <div class="field"><button class="spin" aria-label="Step"><svg><use href="#spin"/></svg></button><input type="text" value="0 in" aria-label="First line indent"></div>
                        <svg viewBox="0 0 32 30"><path d="M0 3h18M0 9h20M0 15h18M0 21h20M0 27h10M24 27h8"/><path d="M26 22l-6 5 6 5z" class="solid"/></svg>
                        <div class="field"><button class="spin" aria-label="Step"><svg><use href="#spin"/></svg></button><input type="text" value="0 in" aria-label="Last line indent"></div>
                    </div>
                    <div class="rows">
                        <svg viewBox="0 0 32 30"><path d="M15 2h16v8H15zM14 15h14M14 21h18M14 28h14M0 6h8"/><path d="M6 1l6 5-6 5z" class="solid"/></svg>
                        <div class="field"><button class="spin" aria-label="Step"><svg><use href="#spin"/></svg></button><input type="text" value="0 in" aria-label="Space before"></div>
                        <svg viewBox="0 0 32 30"><path d="M15 19h16v9H15zM14 2h14M14 8h18M14 14h14M0 24h8"/><path d="M6 19l6 5-6 5z" class="solid"/></svg>
                        <div class="field"><button class="spin" aria-label="Step"><svg><use href="#spin"/></svg></button><input type="text" value="0 in" aria-label="Space after"></div>
                        <svg viewBox="0 0 32 30"><path d="M22 3h10M22 8h10M22 14h10M8 21h24M8 27h24M3 4v8"/><path d="M3 0l3 5H0zM3 15l3-5H0z" class="solid"/><text x="8" y="15">A</text></svg>
                        <div class="field"><button class="spin" aria-label="Step"><svg><use href="#spin"/></svg></button><input type="text" value="0" aria-label="Drop cap lines"></div>
                        <svg viewBox="0 0 32 30"><path d="M25 3h7M25 8h7M25 14h7M0 21h32M0 27h32M13 9h10M18 4v10"/><text x="0" y="15">A</text></svg>
                        <div class="field"><button class="spin" aria-label="Step"><svg><use href="#spin"/></svg></button><input type="text" value="0" aria-label="Drop cap characters"></div>
                    </div>
                    <div class="line shade">
                        <label><input type="checkbox">Shading</label>
                        <svg width="32" height="32" viewBox="0 0 32 32"><path d="M0 0h32v32H0z" fill="#505050"/><path d="M2 2h8v8H2zM22 22h8v8h-8z" fill="#fff"/><path d="M12 2h8v8h-8zM2 12h8v8H2z" fill="#a5a5a5"/><path d="M22 2h8v8h-8zM12 12h8v8h-8zM12 22h8v8h-8z" fill="#ccc"/></svg>
                        <div class="field swatch"><i></i><select aria-label="Shading color"><option>C=100...</option></select><span class="drop"><svg class="chev"><use href="#down"/></svg></span></div>
                    </div>
                    <div class="line hyphen">
                        <label><input type="checkbox" checked>Hyphenate</label>
                        <button class="square on" aria-label="Do not align to grid"><svg viewBox="0 0 32 28"><path d="M0 4h14M0 10h14M0 16h14M18 10h14M18 16h14M18 22h14"/></svg></button>
                        <button class="square" aria-label="Align to baseline grid"><svg viewBox="0 0 32 28"><path d="M2 8h12M2 12h12M2 16h12M2 20h12M18 8h12M18 12h12M18 16h12M18 20h12"/></svg></button>
                    </div>
                </div>
            </section>

            <aside class="dockpanels">
                <div class="strip right"><svg class="flip" width="20" height="12"><use href="#more"/></svg></div>
                <div class="set">
                    <svg class="grip"><use href="#grip"/></svg>
                    <button><svg viewBox="0 0 38 38"><path d="M2 14h12V4h9v29H2zM2 12L11 4v8zM24 4h3v10h9v19H24zM29 4l8 8h-8z" fill="#555"/><path d="M18.500 4v29" stroke="#f0f0f0"/><path d="M19 0v4M19 33v5" stroke="#555" stroke-width="2"/></svg>Pages</button>
                    <button><svg viewBox="0 0 38 38"><path d="M19 1l19 11-19 11L0 12zM0 24l5-3 14 8 14-8 5 3-19 11z" fill="#555"/></svg>Layers</button>
                    <button><svg viewBox="0 0 38 38"><use href="#chain" y="11" width="38" height="16"/></svg>Links</button>
                </div>
                <div class="set">
                    <svg class="grip"><use href="#grip"/></svg>
                    <button><svg viewBox="0 0 38 38"><path d="M2 6h34v2H2zM2 14h34v4H2zM2 24h34v6H2z" fill="#555"/></svg>Stroke</button>
                    <button><svg viewBox="0 0 38 38"><path d="M19 5q18 0 19 14-2 13-20 13Q1 31 0 22q1-7 9-8 8 0 6-4 0-4 4-5" fill="#555"/><g fill="#f0f0f0"><circle cx="8" cy="23" r="3.500"/><circle cx="18" cy="26" r="3.500"/><circle cx="27" cy="24" r="3"/><circle cx="32" cy="19" r="3"/><circle cx="30" cy="12" r="2.500"/></g></svg>Color</button>
                </div>
                <div class="set">
                    <svg class="grip"><use href="#grip"/></svg>
                    <button><svg viewBox="0 0 38 38"><path d="M2 7h32v23H2z" fill="#505050"/><path d="M4 9h8v8H4zM14 19h8v9h-8z" fill="#a5a5a5"/><path d="M24 9h8v8h-8zM4 19h8v9H4z" fill="#d0d0d0"/><path d="M24 19h8v9h-8z" fill="#888"/></svg>Swatches</button>
                    <button><svg viewBox="0 0 38 38"><path d="M3 3h12v4h21v27H3z" fill="none" stroke="#555" stroke-width="2"/><path d="M8 30V20l4-4v-3h5v3h5v-3h5v3l3 3v11z" fill="#444"/></svg>CC Libraries</button>
                </div>
                <div class="set">
                    <svg class="grip"><use href="#grip"/></svg>
                    <button class="on"><svg viewBox="0 0 38 38"><path d="M13 5h15v29h-2V7h-4v27h-2V21h-7q-7-1-7-8t7-8" fill="#3c3c3c"/><path d="M22 7h4v27h-4z" fill="#e4e4e4"/></svg>Paragraph</button>
                </div>
            </aside>
        </div>
    </main>

    <footer class="desktop">
        <div class="file"><span class="docx">DOCX</span><b>E FRON</b><b class="ad">AD</b></div>
        <div class="dock">
            <div class="apps">
                <a href="#" class="open" aria-label="Finder"><svg viewBox="0 0 80 80"><rect x="4" y="6" width="72" height="68" rx="4" fill="#eef2f8"/><path d="M8 6h40q-12 18-10 38h8q0 16 3 30H8q-4 0-4-4V10q0-4 4-4" fill="url(#gBlue)"/><path d="M24 24v8M56 24v8M18 50q22 18 44 0" fill="none" stroke="#12202e" stroke-width="3.500"/></svg></a>
                <a href="#" aria-label="Siri"><svg viewBox="0 0 80 80"><use href="#siri"/></svg></a>
                <a href="#" aria-label="Launchpad"><svg viewBox="0 0 80 80"><circle cx="40" cy="40" r="39" fill="#cfdadd"/><circle cx="40" cy="40" r="36" fill="url(#gGray)"/><path d="M64 16q-20 1-32 20-12-2-20 9l13 2 8 9q6 2 6 12 9-8 8-17 16-12 17-35M24 52q-8 5-7 14 9-1 11-10z" fill="#3c4043"/><circle cx="49" cy="32" r="5" fill="#b5c0c3"/></svg></a>
                <a href="#" class="open" aria-label="Mail"><svg viewBox="0 0 80 80"><path d="M4 10l58-9 10 68-58 10z" fill="#fff" stroke="#eee" stroke-width="3" stroke-dasharray="3 3"/><path d="M10 15l48-8 8 57-48 8z" fill="#4a97e4"/><path d="M14 44l49-6 3 26-48 8z" fill="#9cc6ee"/><path d="M16 15q14 4 20 25l4 1q8-1 8 3l-4 4q10 4 16 12l-4 5q-12-4-20-11-10 4-16 0 4-8 9-10-10-12-13-29" fill="#5a4630"/><path d="M20 49l14-9 8 4-8 9q-9 3-14-4" fill="#c9a878"/><circle cx="61" cy="60" r="17" fill="none" stroke="#5a5550" stroke-width="2" opacity=".6"/><circle cx="61" cy="60" r="10" fill="none" stroke="#5a5550" opacity=".6"/><circle cx="61" cy="60" r="5" fill="#445" opacity=".6"/></svg><em>20</em></a>
                <a href="#" aria-label="Contacts"><svg viewBox="0 0 80 80"><path d="M60 8h10v17H60z" fill="#eee"/><path d="M64 24h8v14h-8z" fill="#57c3d9"/><path d="M66 39h8v14h-8z" fill="#5cc254"/><path d="M68 54h8v14h-8z" fill="#f3a928"/><path d="M8 7l50-7q4 0 4 4l8 64-56 10q-4 0-4-4z" fill="#b8904f"/><circle cx="38" cy="36" r="20" fill="none" stroke="#9c783c" stroke-width="2"/><circle cx="32" cy="31" r="8" fill="#a27e42"/><circle cx="45" cy="30" r="8" fill="#a27e42"/><path d="M22 46q9-11 16-3 8-9 18-1-5 12-17 13-13 0-17-9" fill="#a27e42"/></svg></a>
                <a href="#" aria-label="Calendar"><svg viewBox="0 0 80 80"><path d="M8 12l60-10 10 65-62 11z" fill="#555a60"/><path d="M8 12l58-9 9 61-58 10z" fill="#fff"/><path d="M8 12l58-9 3 20-58 9z" fill="#e0403f"/><text x="24" y="23" font-size="14" fill="#fff">JUN</text><text x="20" y="64" font-size="38" fill="#222">30</text></svg></a>
                <a href="#" aria-label="Notes"><svg viewBox="0 0 80 80"><path d="M6 9L64 0l12 70-60 9z" fill="#fdfdfb"/><path d="M6 9L64 0l2 13L8 22z" fill="#fbca2b"/><path d="M10 30l58-8M11 38l58-8M12 46l58-8M13 54l59-8M14 62l59-8M16 70l58-8" stroke="#d5d5d5" stroke-width="1.500"/></svg></a>
                <a href="#" aria-label="Reminders"><svg viewBox="0 0 80 80"><path d="M9 12l58-9 10 64-61 12z" fill="#333"/><path d="M8 9L60 1q4 0 5 4l10 61-58 11q-4 0-4-4L5 14q0-4 3-5" fill="#fbfbfb"/><circle cx="17" cy="21" r="5" fill="#f90"/><circle cx="19" cy="35" r="5" fill="#1badf8"/><circle cx="21" cy="48" r="5" fill="#63da38"/><circle cx="23" cy="62" r="5" fill="#cc73e1"/><path d="M27 24l31-6M29 38l31-6M31 51l31-6M33 64l31-6" stroke="#ddd" stroke-width="2"/></svg></a>
                <a href="#" aria-label="Maps"><svg viewBox="0 0 80 80"><path d="M4 14L66 4l8 60-60 12z" fill="#f2ede2"/><path d="M40 8l26-4 5 34Q46 32 40 8" fill="#8fd07f"/><path d="M5 22l66 42-14 4L7 36z" fill="#f6cf4e"/><path d="M16 12l12-2 4 48H20z" fill="#3a94e6"/><path d="M8 46l10 8 2 21-8 1z" fill="#f7b8c8"/><circle cx="27" cy="50" r="11" fill="#1683e8"/><path d="M27 42l6 14-6-3-6 3z" fill="#fff"/><circle cx="63" cy="56" r="18" fill="#f4f4f4"/><circle cx="63" cy="57" r="12" fill="none" stroke="#8bb0d6" stroke-width="2"/><text x="55" y="62" font-size="13" fill="#555">3D</text><path d="M63 39l4 5h-8z" fill="#d33"/></svg></a>
                <a href="#" class="open" aria-label="TextEdit"><svg viewBox="0 0 80 80"><path d="M6 9L64 0l8 70-57 9z" fill="#fdfdfd"/><path d="M9 18l54-8M10 26l54-8M11 34l54-8M12 42l54-8M13 50l54-8M14 58l54-8M15 66l54-8" stroke="#ccc" stroke-width="1.500"/><path d="M70 2l5 2-17 68-5 6 1-9z" fill="#8ba3b8" stroke="#667b8e"/></svg></a>
                <a href="#" aria-label="Photos"><svg viewBox="0 0 80 80"><circle cx="40" cy="40" r="39" fill="#fbfbfb"/><g opacity=".85"><rect x="31" y="6" width="18" height="33" rx="9" fill="#f9a01b"/><rect x="31" y="6" width="18" height="33" rx="9" fill="#e9d21d" transform="rotate(45 40 40)"/><rect x="31" y="6" width="18" height="33" rx="9" fill="#9ac93b" transform="rotate(90 40 40)"/><rect x="31" y="6" width="18" height="33" rx="9" fill="#5cba8a" transform="rotate(135 40 40)"/><rect x="31" y="6" width="18" height="33" rx="9" fill="#6aa7dc" transform="rotate(180 40 40)"/><rect x="31" y="6" width="18" height="33" rx="9" fill="#8d7fc4" transform="rotate(225 40 40)"/><rect x="31" y="6" width="18" height="33" rx="9" fill="#cf6fa8" transform="rotate(270 40 40)"/><rect x="31" y="6" width="18" height="33" rx="9" fill="#ef5640" transform="rotate(315 40 40)"/></g></svg></a>
                <a href="#" class="open" aria-label="Chrome"><svg viewBox="0 0 80 80"><circle cx="40" cy="40" r="40" fill="#fbcb43"/><path d="M40 40L5 20A40 40 0 0 0 36 80l20-32z" fill="#1da462"/><path d="M40 22h35A40 40 0 0 0 5 20l19 30q0-28 16-28" fill="#d94f41"/><circle cx="40" cy="40" r="18" fill="#f6f6f6"/><circle cx="40" cy="40" r="14" fill="#4b8bf4"/></svg></a>
                <a href="#" class="open" aria-label="Messages"><svg viewBox="0 0 80 80"><path d="M39 5a38 34 0 0 1 0 68q-10 0-16-3l-9 4 4-8A38 34 0 0 1 39 5" fill="#2d95f5"/><path d="M53 35a22 19 0 1 0 12 36l7 4-2-7a22 19 0 0 0-17-33" fill="#f4f8fd"/><circle cx="43" cy="54" r="3.500" fill="#1450a0"/><circle cx="54" cy="54" r="3.500" fill="#1450a0"/><circle cx="65" cy="54" r="3.500" fill="#1450a0"/></svg></a>
                <a href="#" class="open" aria-label="WhatsApp"><svg viewBox="0 0 80 80"><path d="M2 78l6-20A39 39 0 1 1 22 73z" fill="#f0efee"/><path d="M10 70l4-14A32 32 0 1 1 25 66z" fill="#41bb4e"/><path d="M24 22l8-1 4 12-4 6q5 9 13 12l6-5 10 6q-3 10-13 9-24-8-28-31 0-5 4-8" fill="#fff"/></svg><em>3</em></a>
                <a href="#" aria-label="FaceTime"><svg viewBox="0 0 80 80"><rect x="4" y="7" width="70" height="60" rx="7" fill="url(#gGreen)"/><rect x="16" y="22" width="33" height="28" rx="6" fill="#f2f5f2"/><path d="M52 34l13-9v23z" fill="#f2f5f2"/><circle cx="63" cy="53" r="19" fill="#fafafa"/><path d="M55 43l4 6-2 4 7 8 5-1 3 4q-3 5-9 2-12-8-12-18 1-5 4-5" fill="#28c840"/></svg></a>
                <a href="#" class="open" aria-label="Pages"><svg viewBox="0 0 80 80"><path d="M4 10L62 0l10 71-58 9z" fill="#fbfbfb"/><path d="M4 10L62 0l2 13L6 22z" fill="#f08a1d"/><text x="9" y="18" font-size="11" fill="#fff">PAGES</text><path d="M12 25l28-4 3 20-29 4z" fill="#1f84d3"/><path d="M20 28q8 5 8 1 5 5 7-3 1 14-8 14-6-3-7-12" fill="#f58518"/><path d="M44 22l14-2M45 30l14-2M46 38l13-2M16 50l44-7M17 57l41-6M18 64l38-6" stroke="#aaa" stroke-width="2"/><path d="M67 2l7 2-19 56-6 18-2-1 4-22z" fill="#d9931f"/><path d="M51 54l6 2-9 22z" fill="#333"/></svg></a>
                <a href="#" aria-label="Font Book"><svg viewBox="0 0 80 80"><path d="M8 9L60 0q4 0 5 4l8 60-60 14z" fill="#50585a"/><path d="M8 9L60 0l10 64-58 12z" fill="#8d9a9c"/><path d="M12 20l50-8M14 65l51-8M26 8l7 64M54 5l7 60" stroke="#747f81"/><text x="22" y="58" font-size="54" fill="#20282c" class="serif">F</text></svg></a>
                <a href="#" aria-label="iTunes"><svg viewBox="0 0 80 80"><circle cx="40" cy="40" r="38" fill="#fbfbfd" stroke="url(#gMusic)" stroke-width="4"/><path d="M31 21l28-6v38a8 7 0 1 1-5-7V25l-18 4v29a8 7 0 1 1-5-7z" fill="url(#gMusic)"/></svg></a>
                <a href="#" aria-label="iBooks"><svg viewBox="0 0 80 80"><circle cx="40" cy="40" r="39" fill="#eee"/><circle cx="40" cy="40" r="35" fill="url(#gOrange)"/><path d="M39 26q-10-6-22 0v29q12-5 22 2zM41 26q10-6 22 0v29q-12-5-22 2z" fill="#fff"/></svg></a>
                <a href="#" aria-label="App Store"><svg viewBox="0 0 80 80"><circle cx="40" cy="40" r="39" fill="#eef1f5"/><circle cx="40" cy="40" r="35" fill="url(#gBlue)"/><path d="M44 18L24 54M36 18l23 40M16 48h28M52 48h13M22 58l-2 3" fill="none" stroke="#fff" stroke-width="6" stroke-linecap="round"/></svg><em>4</em></a>
                <a href="#" aria-label="Feedback"><svg viewBox="0 0 80 80"><circle cx="40" cy="40" r="39" fill="#eee"/><circle cx="40" cy="40" r="35" fill="url(#gPurple)"/><path d="M40 18a22 21 0 1 1-6 42l-10 4 4-8A22 21 0 0 1 40 18" fill="#f7f5fa"/><path d="M37 26h6l-1 18h-4z" fill="#9a4df0"/><circle cx="40" cy="50" r="3.500" fill="#9a4df0"/></svg></a>
                <a href="#" class="open" aria-label="Grammarly"><svg viewBox="0 0 80 80"><circle cx="40" cy="40" r="39" fill="#2cb673"/><path d="M58 28a21 21 0 1 0 0 26M46 46h14v15" fill="none" stroke="#fff" stroke-width="5"/></svg></a>
                <a href="#" aria-label="System Preferences"><svg viewBox="0 0 80 80"><rect x="2" y="5" width="76" height="70" rx="4" fill="url(#gGray)"/><circle cx="40" cy="40" r="30" fill="#2b2d2f"/><circle cx="40" cy="40" r="27" fill="none" stroke="#c9cccd" stroke-width="3" stroke-dasharray="3 2"/><circle cx="40" cy="40" r="22" fill="none" stroke="#a8acae" stroke-width="5"/><path d="M40 40h20M40 40L29 22M40 40L29 58" stroke="#b8bcbe" stroke-width="5"/></svg></a>
                <a href="#" class="open cc id" aria-label="InDesign">Id</a>
                <a href="#" class="cc ai" aria-label="Illustrator">Ai</a>
                <a href="#" class="cc ps" aria-label="Photoshop">Ps</a>
                <a href="#" class="open cc pdf" aria-label="Acrobat"><svg viewBox="0 0 80 80"><path d="M16 64q-5-4 3-10Q32 46 60 47q8 3 5 7-7 4-16-4-12-14-11-30 1-6 4-3 5 8-4 28-9 22-22 19" fill="none" stroke="#fff" stroke-width="3"/></svg></a>
            </div>
            <i class="divider"></i>
            <a href="#" aria-label="Documents"><svg viewBox="0 0 80 80"><path d="M12 2h28v20H12z" fill="#eee"/><path d="M34 0h10v24H34z" fill="#444"/><path d="M48 6h18v18H48z" fill="#fafafa"/><path d="M3 15h24l6 5h41q3 0 3 3v50H3z" fill="#6cc5f5"/><path d="M3 24h74v49H3z" fill="#7dd0f8"/></svg></a>
            <a href="#" aria-label="Trash"><svg viewBox="0 0 80 80"><path d="M12 14L20 2l9 6 11-8 8 6 10-5 9 12z" fill="#f3f3f3" stroke="#666" stroke-width="2"/><path d="M28 8l7 8-10 2zM48 6l6 10-11-2z" fill="#556"/><path d="M9 12q31 10 62 0l-9 62q-3 5-22 5t-22-5z" fill="url(#gTrash)"/></svg></a>
        </div>
        <div class="photo"><svg viewBox="0 0 58 88"><path d="M36 4q12 0 22-4v14H36z" fill="#c9a227"/><path d="M38 18h20v56q-16-4-20-14z" fill="#c0392b"/><path d="M43 24h15v42q-12-4-15-12z" fill="#e6b93a"/><path d="M49 28l2 4 4 1-3 3v4l-3-2-4 2 1-4-3-3 4-1zM49 52l2 4 4 1-3 3v4l-3-2-4 2 1-4-3-3 4-1z" fill="#2f8a8a"/><path d="M27 68q12 4 31 4v14q-20 0-31-8z" fill="#c8a44a"/></svg></div>
    </footer>
</body>
</html>
```
FILE: styles.css
```css
* {
    box-sizing: border-box;
}

body {
    margin: 0;
    height: 100vh;
    display: flex;
    flex-direction: column;
    overflow: hidden;
    font-family: "Noto Sans", sans-serif;
    font-size: 21px;
    color: #222;
    background-color: #3a2418;
}

a {
    color: inherit;
    text-decoration: none;
}

svg {
    flex: none;
    display: block;
}

.defs {
    position: absolute;
}

button, input, select {
    font: inherit;
    color: inherit;
    margin: 0;
    padding: 0;
    border: none;
    background: none;
    outline: none;
}

select {
    appearance: none;
}

.chev {
    width: 18px;
    height: 12px;
    color: #444;
}

/* menu bar */
.menubar {
    height: 46px;
    flex: none;
    display: flex;
    align-items: center;
    padding: 0 46px 0 42px;
    background-color: #e4eef8;
    border-bottom: 2px solid #44546a;
    font-family: Inter, sans-serif;
    font-size: 28px;
    white-space: nowrap;
    color: #2e3b46;
}

.apple {
    width: 26px;
    height: 32px;
    margin: -4px 40px 0 0;
}

.menus {
    display: flex;
    gap: 37px;
}

.app {
    font-weight: 700;
}

.extras {
    margin-left: auto;
    display: flex;
    align-items: center;
    gap: 30px;
}

/* window */
.window {
    flex: 1;
    min-height: 0;
    display: flex;
    flex-direction: column;
    border: 2px solid #c8c8c8;
    border-radius: 14px 14px 0 0;
    background-color: #f0f0f0;
}

.appbar {
    height: 68px;
    flex: none;
    display: flex;
    align-items: center;
    padding: 0 28px 2px 16px;
    border-bottom: 2px solid #c8c8c8;
    font-size: 25px;
    color: #555;
}

.lights {
    display: flex;
    gap: 16px;
    margin-right: 37px;
}

.lights i {
    width: 24px;
    height: 24px;
    border-radius: 50%;
    border: 1px solid rgba(0, 0, 0, 0.15);
}

.lights .red {
    background: radial-gradient(circle, #5a0500 4px, #ff5f57 5px);
}

.lights .yellow {
    background-color: #fdbc2e;
}

.lights .green {
    background-color: #28c83f;
}

.logo {
    width: 81px;
    font-family: "Open Sans", sans-serif;
    font-size: 40px;
    font-weight: 500;
    line-height: 56px;
    padding-bottom: 4px;
    color: #855a6e;
}

.badge {
    width: 32px;
    height: 32px;
    margin-right: 40px;
    background-color: #505050;
    color: #fff;
    font-size: 20px;
    font-weight: 600;
    line-height: 32px;
}

.pick {
    position: relative;
    display: flex;
    align-items: center;
}

.zoom {
    width: 158px;
    height: 40px;
    margin-left: -4px;
    border-right: 2px solid #ddd;
}

.zoom select {
    flex: 1;
}

.zoom .chev {
    margin-right: 22px;
}

.views {
    display: flex;
    gap: 28px;
    padding-left: 18px;
}

.views button {
    display: flex;
    align-items: center;
    gap: 15px;
}

.publish {
    margin-left: auto;
    width: 244px;
    height: 52px;
    display: flex;
    align-items: center;
    justify-content: center;
    gap: 10px;
    border: 2px solid #444;
    border-radius: 26px;
    font-size: 25px;
}

.workspace-name {
    display: flex;
    align-items: center;
    gap: 18px;
    height: 40px;
    margin: 0 12px 0 10px;
    padding: 0 28px 0 26px;
    border: 2px solid #ddd;
    border-width: 0 3px;
    font-size: 25px;
    font-weight: 600;
    color: #444;
}

.stock {
    width: 260px;
    height: 40px;
    display: flex;
    align-items: center;
    gap: 10px;
    padding-left: 8px;
    border: 2px solid #c0c0c0;
    border-radius: 5px;
    background-color: #fbfbfb;
}

.stock input {
    width: 190px;
    font-size: 21px;
}

.stock input::placeholder {
    color: #777;
}

/* control bar */
.control {
    height: 120px;
    flex: none;
    display: flex;
    align-items: center;
    border-bottom: 2px solid #c8c8c8;
}

.group {
    display: grid;
    grid-auto-flow: column;
    grid-template-rows: 42px 42px;
    row-gap: 10px;
    align-items: center;
    border-right: 2px solid #dfdfdf;
}

.group > label {
    text-align: right;
    padding-right: 6px;
    font-size: 21px;
    color: #111;
}

.tall {
    grid-row: span 2;
}

.mid {
    justify-self: center;
}

.position {
    grid-template-columns: 42px 51px 52px 174px 52px 174px 69px;
    padding-left: 9px;
}

.scale {
    grid-template-columns: 37px 174px 76px 34px 174px;
    padding: 0 10px 0 14px;
}

.scale .square {
    margin-left: 10px;
}

.flips {
    grid-template-columns: 58px 46px 84px;
    justify-items: center;
    padding-left: 6px;
}

.proxy {
    position: relative;
}

.proxy span {
    position: absolute;
    inset: 0;
    text-align: center;
    line-height: 50px;
    font-family: "Liberation Serif", serif;
    font-size: 44px;
    color: #555;
}

.trees {
    grid-template-columns: 62px 48px;
    justify-items: center;
    padding: 0 11px 0 1px;
}

.pale {
    color: #a0a0a0;
}

.ink {
    color: #444;
}

.paint {
    grid-template-columns: 42px 34px;
    column-gap: 6px;
    padding: 0 10px 0 8px;
}

.arrow {
    width: 34px;
    height: 42px;
    display: flex;
    align-items: center;
    justify-content: center;
    border: 2px solid #bcbcbc;
    border-radius: 6px;
    background-color: #fafafa;
    color: #444;
}

.weight {
    grid-template-columns: 174px;
    padding: 0 10px 0 8px;
}

.bar {
    flex: 1;
    height: 15px;
    margin: 0 18px 0 8px;
    background-color: #000;
}

.effects {
    grid-template-columns: 177px;
    padding: 0 10px 0 14px;
}

.icons, .opacity {
    display: flex;
    align-items: center;
}

.icons {
    gap: 24px;
    padding-left: 4px;
}

.fx {
    font-size: 24px;
    font-style: italic;
    color: #555;
}

.fx small {
    font-size: 12px;
    font-style: normal;
}

.opacity {
    gap: 13px;
}

.wraps {
    grid-template-columns: 48px 48px;
    column-gap: 8px;
    padding: 0 9px;
}

.corners {
    grid-template-columns: 38px 174px;
    padding: 0 10px 0 13px;
}

.corners .field {
    grid-column: 2;
}

.cornershape {
    flex: 1;
    height: 38px;
}

.bolt {
    margin: 0 18px 0 auto;
}

.prefs {
    width: 56px;
    justify-items: center;
    border-right: none;
    border-left: 2px solid #dfdfdf;
}

.field {
    flex: 1;
    height: 42px;
    display: flex;
    align-items: center;
    min-width: 0;
    overflow: hidden;
    border: 2px solid #bcbcbc;
    border-radius: 6px;
    background-color: #fbfbfb;
}

.field input {
    flex: 1;
    min-width: 0;
    height: 38px;
    padding-left: 9px;
}

.field.off {
    border-color: #dcdcdc;
    background-color: #dcdcdc;
    color: #bbb;
}

.off .chev {
    margin-right: 9px;
    color: #bbb;
}

.spin {
    width: 34px;
    height: 38px;
    flex: none;
    background-color: #f0f0f0;
    border-right: 2px solid #bcbcbc;
    color: #111;
}

.spin svg {
    width: 32px;
    height: 38px;
}

.off .spin {
    border: none;
    background: none;
    color: #bbb;
}

.drop {
    width: 37px;
    height: 38px;
    flex: none;
    display: flex;
    align-items: center;
    justify-content: center;
    background-color: #f0f0f0;
    border-left: 2px solid #bcbcbc;
    color: #444;
}

.square {
    width: 48px;
    height: 48px;
    display: flex;
    align-items: center;
    justify-content: center;
    border-radius: 6px;
}

.on {
    background-color: #bcbcbc;
    border: 2px solid #a8a8a8;
}

/* work area */
.workspace {
    flex: 1;
    min-height: 0;
    display: flex;
    background-color: #dbdbdb;
}

.strip {
    align-self: stretch;
    height: 24px;
    flex: none;
    display: flex;
    align-items: center;
    padding: 0 7px;
    background-color: #dbdbdb;
    border-bottom: 2px solid #c8c8c8;
    color: #333;
}

.strip.right {
    justify-content: flex-end;
}

.flip, .left {
    transform: scaleX(-1);
}

.grip {
    width: 38px;
    height: 8px;
}

.tools {
    width: 78px;
    display: flex;
    flex-direction: column;
    align-items: center;
    background-color: #f0f0f0;
    border-right: 2px solid #c8c8c8;
}

.tools .grip {
    margin: 6px 0 14px;
}

.tools > button {
    width: 60px;
    height: 49px;
    border-radius: 5px;
}

.tools > button svg {
    width: 60px;
    height: 48px;
}

.tools > .on {
    height: 48px;
    margin-bottom: 1px;
}

.tools > .on svg {
    margin: -2px;
}

.fillstroke {
    width: 60px;
    height: 60px;
    margin-top: 9px;
}

.apply {
    width: 60px;
    display: flex;
    margin: 8px 0 10px;
}

.apply button {
    width: 32px;
    height: 28px;
    display: flex;
    align-items: center;
    justify-content: center;
    border-radius: 5px;
    font-family: "Liberation Serif", serif;
    font-size: 26px;
    font-weight: 700;
    color: #444;
}

.tools > .wide {
    margin-bottom: 10px;
}

.document {
    flex: 1;
    min-width: 0;
    position: relative;
    display: flex;
    flex-direction: column;
    margin: 0 2px;
    border-left: 2px solid #c8c8c8;
    border-right: 2px solid #c8c8c8;
}

.tabs {
    height: 58px;
    flex: none;
    display: flex;
    border-bottom: 2px solid #c8c8c8;
}

.tab {
    display: flex;
    align-items: center;
    gap: 20px;
    padding: 0 27px 0 29px;
    border-right: 2px solid #c8c8c8;
    font-size: 21px;
    font-weight: 700;
    color: #777;
}

.tab.active {
    background-color: #f0f0f0;
    color: #4a4a4a;
}

.view {
    flex: 1;
    min-height: 0;
    display: grid;
    grid-template-columns: 32px 1fr 32px;
    grid-template-rows: 32px 1fr;
}

.origin {
    border-right: 2px solid #111;
    border-bottom: 2px solid #111;
    background:
        repeating-linear-gradient(90deg, #111 0 2px, transparent 2px 4px) 0 9px / 100% 2px no-repeat,
        repeating-linear-gradient(#111 0 2px, transparent 2px 4px) 9px 0 / 2px 100% no-repeat,
        #f7f7f7;
}

.ruler {
    position: relative;
    overflow: hidden;
    display: flex;
    background-color: #f7f7f7;
    font-family: "DejaVu Sans", sans-serif;
    font-size: 17px;
    line-height: 20px;
}

.ruler div {
    flex: none;
    position: relative;
}

.ruler svg {
    width: 100%;
    height: 100%;
}

.ruler span {
    position: absolute;
    top: 3px;
    left: 5px;
}

.across {
    border-bottom: 2px solid #111;
    padding-left: 4px;
}

/* one inch of the ruler at this zoom level */
.across div {
    width: calc(547px / 2);
}

.downward {
    flex-direction: column;
    border-right: 2px solid #111;
    padding-top: 13px;
}

.downward div {
    width: 30px;
    height: calc(547px / 2);
}

.downward .cursor-y {
    position: absolute;
    top: 203px;
    width: 100%;
    border-top: 2px dotted #000;
}

.across .cursor-x {
    position: absolute;
    left: 162px;
    height: 100%;
    border-left: 2px dotted #000;
}

.scroll-y {
    grid-column: 3;
    grid-row: 1 / 3;
    display: grid;
    grid-template-rows: 240px 837px 1fr;
    justify-items: center;
    background-color: #fafafa;
}

.scroll-y i {
    width: 28px;
    border-radius: 14px;
    background-color: #cacaca;
}

.scroll-y .up {
    width: 16px;
    height: 12px;
    margin-top: 8px;
    color: #888;
    transform: scaleY(-1);
}

.scroll-y .chev {
    align-self: end;
    margin-bottom: 8px;
    color: #888;
}

.pasteboard {
    grid-column: 2;
    grid-row: 2;
    overflow: hidden;
    padding: 12px 200px 0 278px;
    background-color: #dcdcdc;
}

.page {
    height: 1400px;
    padding: 135px 136px;
    border: 1px solid #444;
    border-right: 5px solid #000;
    background-color: #fff;
}

.margins {
    height: 1095px;
    display: grid;
    grid-template-columns: 1fr 1fr 1fr;
    column-gap: 44px;
    border: 1px solid #b94fc4;
    border-width: 1px 0;
}

.column {
    position: relative;
    border: 1px solid #a03cb8;
    border-width: 0 1px;
}

/* paragraph rules sit on the first and last baselines */
.column p {
    margin: 0;
    padding-top: 1px;
    font-family: "Liberation Sans", sans-serif;
    font-size: 42px;
    line-height: 50px;
    white-space: nowrap;
    color: #000;
    background:
        linear-gradient(#000, #000) 0 36px / 100% 5px no-repeat,
        linear-gradient(#000, #000) 0 491px / 100% 5px no-repeat;
}

.outport {
    position: absolute;
    right: -8px;
    bottom: 48px;
    width: 16px;
    height: 16px;
    border: 1px solid #d070b8;
    background: linear-gradient(#c05, #c05) center / 8px 1px no-repeat #fff;
}

/* status bar */
.status {
    height: 32px;
    flex: none;
    display: flex;
    align-items: center;
    gap: 27px;
    padding: 0 4px 0 23px;
    background-color: #e6e6e6;
    color: #555;
}

.pageno {
    flex: none;
    width: 180px;
    height: 31px;
    color: #111;
}

.status .profile {
    width: 228px;
}

.status select {
    flex: 1;
    font-size: 20px;
}

.errors {
    width: 176px;
    gap: 12px;
    color: #111;
}

.errors i {
    width: 21px;
    height: 21px;
    border-radius: 50%;
    background-color: #e53935;
}

.scroll-x {
    flex: 1;
    height: 32px;
    margin: 0 -6px;
    display: grid;
    grid-template-columns: 12px 29fr 592px 31fr 12px;
    align-items: center;
    background-color: #f0f0f0;
    color: #888;
}

.scroll-x i {
    grid-column: 3;
    height: 29px;
    border-radius: 14px;
    background-color: #c2c2c2;
}

.scroll-x svg:last-child {
    grid-column: 5;
}

.window-tools {
    display: flex;
    align-items: center;
    gap: 12px;
}

/* paragraph panel */
.panel {
    position: absolute;
    top: 488px;
    right: -2px;
    width: 484px;
    border: 2px solid #c8c8c8;
    border-top: 8px solid #c4c4c4;
    background-color: #f0f0f0;
    box-shadow: 0 4px 14px rgba(0, 0, 0, 0.3);
}

.panel-head {
    height: 54px;
    display: flex;
    align-items: center;
    background-color: #dbdbdb;
    border-bottom: 2px solid #c8c8c8;
    padding-right: 12px;
    color: #333;
}

.panel-head h2 {
    height: 54px;
    width: 176px;
    margin: 0 auto 0 0;
    padding-left: 15px;
    display: flex;
    align-items: center;
    gap: 10px;
    border-right: 2px solid #c8c8c8;
    background-color: #f0f0f0;
    font-size: 22px;
    font-weight: 700;
    color: #555;
}

.panel-head i {
    width: 2px;
    height: 22px;
    margin: 0 14px 0 13px;
    background-color: #777;
}

.aligns {
    display: flex;
    height: 72px;
    align-items: center;
    margin: 0 10px;
    border-bottom: 2px solid #dcdcdc;
}

.aligns span {
    width: 14px;
}

.aligns .square svg, .hyphen .square svg, .rows > svg {
    width: 32px;
    height: 28px;
    overflow: visible;
    fill: none;
    stroke: #484848;
    stroke-width: 2;
}

.rows > svg {
    height: 30px;
}

.rows .solid {
    fill: #484848;
    stroke: none;
}

.rows text {
    font-size: 18px;
    fill: #484848;
    stroke: none;
}

.rows {
    display: grid;
    grid-template-columns: 44px 174px 68px 174px;
    row-gap: 10px;
    align-items: center;
    margin: 0 10px;
    padding: 10px 0;
    border-bottom: 2px solid #dcdcdc;
}

.rows > svg {
    margin-left: 2px;
}

.rows > svg:nth-of-type(even) {
    margin-left: 26px;
}

.line {
    display: flex;
    align-items: center;
    margin: 0 10px;
}

.line label {
    flex: 1;
    display: flex;
    align-items: center;
    gap: 12px;
    padding-left: 2px;
    font-size: 20px;
    color: #333;
}

.line input {
    appearance: none;
    width: 24px;
    height: 24px;
    border: 2px solid #6a6a6a;
    border-radius: 4px;
}

.line input:checked {
    background-color: #6a6a6a;
}

.line input:checked::before {
    content: "";
    display: block;
    width: 6px;
    height: 12px;
    margin: 1px 0 0 6px;
    border: solid #fff;
    border-width: 0 3px 3px 0;
    transform: rotate(40deg);
}

.shade {
    height: 88px;
    gap: 4px;
    border-bottom: 2px solid #dcdcdc;
}

.swatch {
    flex: none;
    width: 178px;
    border-radius: 0 6px 6px 0;
}

.swatch i {
    width: 24px;
    height: 24px;
    margin: 0 8px 0 7px;
    border: 2px solid #34495a;
    background-color: #00aeef;
}

.swatch select {
    flex: 1;
    min-width: 0;
    color: #111;
}

.hyphen {
    height: 70px;
}

.hyphen .square + .square {
    margin-left: 6px;
}

/* right panels */
.dockpanels {
    width: 328px;
    background-color: #f0f0f0;
    border-left: 2px solid #c8c8c8;
}

.set {
    display: flex;
    flex-direction: column;
    gap: 8px;
    padding: 6px 8px 10px;
    border-bottom: 2px solid #c8c8c8;
}

.set .grip {
    align-self: center;
}

.set button {
    height: 48px;
    display: flex;
    align-items: center;
    gap: 16px;
    padding-left: 10px;
    border-radius: 5px;
    font-size: 22px;
    font-weight: 700;
    color: #505050;
}

.set .on {
    padding-left: 8px;
}

.set button svg {
    width: 38px;
    height: 38px;
}

/* desktop and dock */
.desktop {
    height: 112px;
    flex: none;
    display: flex;
    background: linear-gradient(#20140c, #4a2c1c);
}

.file {
    width: 74px;
    flex: none;
    overflow: hidden;
    white-space: nowrap;
    font-family: "Open Sans", sans-serif;
    font-size: 20px;
    color: #fff;
}

.file .docx {
    display: block;
    height: 42px;
    padding: 14px 0 0 11px;
    background-color: #c2c2c0;
    color: #777;
    font-size: 19px;
}

.file b {
    display: block;
    line-height: 32px;
}

.file .docx + b {
    margin-top: 18px;
}

.file .ad {
    padding-left: 46px;
    line-height: 24px;
}

.dock {
    flex: 1;
    display: flex;
    align-items: stretch;
    margin-top: 2px;
    padding: 0 7px 0 5px;
    border-radius: 10px 10px 0 0;
    background: linear-gradient(90deg, #a98c86 0%, #b98574 7%, #c9806a 25%, #b0703f 35%, #d97f2f 42%, #e0842a 60%, #ff9018 75%, #cf8431 85%, #a9813a 93%, #c0762e 100%);
}

.apps {
    flex: 1;
    display: grid;
    grid-template-columns: repeat(27, 1fr);
}

.dock a {
    position: relative;
    padding-top: 12px;
}

.dock > a {
    width: 92px;
}

.dock svg {
    width: 80px;
    height: 80px;
    margin: 0 auto;
    overflow: visible;
    font-family: "Open Sans", sans-serif;
}

.dock .serif {
    font-family: "Liberation Serif", serif;
}

.open::after {
    content: "";
    position: absolute;
    left: 50%;
    bottom: 4px;
    width: 8px;
    height: 8px;
    margin-left: -4px;
    border-radius: 50%;
    background-color: #4d0500;
}

.dock em {
    position: absolute;
    top: 6px;
    right: 0;
    min-width: 34px;
    height: 34px;
    border-radius: 17px;
    background-color: #fb3d30;
    color: #fff;
    font-style: normal;
    font-size: 21px;
    line-height: 34px;
    text-align: center;
}

.dock .cc {
    height: 80px;
    margin: 10px 5px 0;
    padding: 0;
    border: 4px solid;
    font-family: "Open Sans", sans-serif;
    font-size: 46px;
    font-weight: 600;
    line-height: 68px;
    text-align: center;
}

.dock .cc::after {
    bottom: -20px;
}

.dock .id {
    background-color: #31000f;
    color: #f0569a;
}

.dock .ai {
    background-color: #2e1700;
    color: #fa8c0c;
}

.dock .ps {
    background-color: #001e2b;
    color: #0cc7f5;
}

.dock .pdf {
    background-color: #2a0505;
    color: #e8350f;
}

.dock .pdf svg {
    width: 72px;
    height: 72px;
}

.divider {
    width: 2px;
    margin: 14px 18px 14px 20px;
    background-color: #8a5a16;
}

.photo {
    width: 74px;
    flex: none;
    padding-left: 16px;
    background: linear-gradient(90deg, #5a3a10, #8a6018);
}

.photo svg {
    width: 58px;
    height: 88px;
    background-color: #dfe5f0;
}
```
